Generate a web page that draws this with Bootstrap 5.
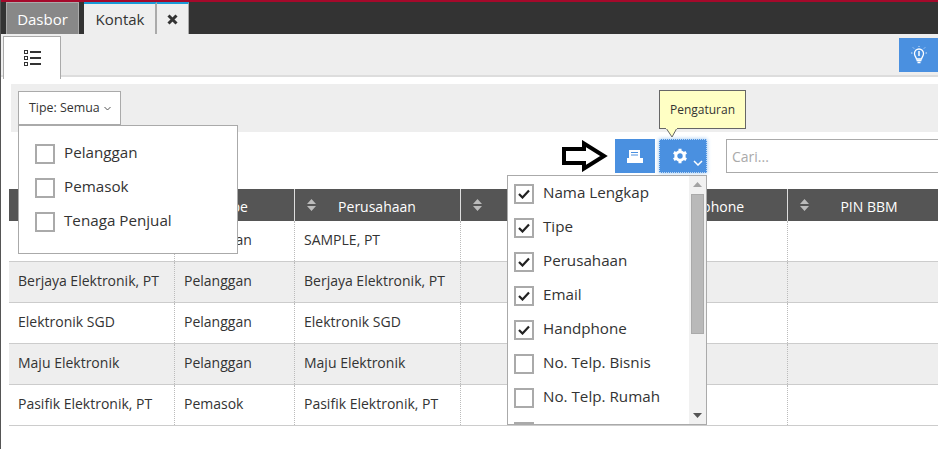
<!DOCTYPE html>
<html lang="id">
<head>
  <meta charset="UTF-8" />
  <meta name="viewport" content="width=device-width, initial-scale=1" />
  <title>Kontak</title>
  <link href="https://cdn.jsdelivr.net/npm/bootstrap@5.3.2/dist/css/bootstrap.min.css" rel="stylesheet">
  <style>
    html, body { height: 449px; overflow: hidden; }
    body {
      font-family: "Open Sans", "Liberation Sans", sans-serif;
      font-size: 14px;
      color: #333;
      background: #fff;
      border-left: 1px solid #555;
    }
    .topbar {
      height: 34px;
      background: #333;
      border-top: 2px solid #a5092b;
      margin-left: -1px;
      padding-left: 6px;
    }
    .toptab {
      height: 32px;
      font-size: 15px;
      text-align: center;
    }
    .toptab-off { width: 73px; margin-right: 5px; background: #888; color: #fff; border: 1px solid #aaa; border-bottom: 0; line-height: 32px; }
    .toptab-on { width: 73px; padding-left: 1px; background: #eee; border-top: 2px solid #1a9ad6; line-height: 30px; border-right: 2px solid #aaa; }
    .toptab-x { width: 32px; background: #eee; border-top: 2px solid #1a9ad6; border-right: 1px solid #aaa; }
    .subbar {
      height: 43px;
      background: #eee;
      border-bottom: 2px solid #ddd;
      padding-left: 2px;
    }
    .subtab {
      width: 58px;
      height: 43px;
      background: #fff;
      border: 1px solid #aaa;
      border-bottom: 0;
      margin-top: 2px;
    }
    .bluebtn {
      background: #4a90e0;
      border: 0;
      border-radius: 0;
      padding: 0;
      height: 34px;
    }
    .bulbbtn { width: 39px; margin-top: 4px; }
    .filterstrip {
      height: 48px;
      margin: 7px 0 7px 10px;
      background: #eee;
      padding: 7px 0 0 7px;
    }
    .filterbtn {
      width: 103px;
      height: 34px;
      background: #fff;
      border: 1px solid #aaa;
      font-size: 12.4px;
      color: #333;
      padding: 0 0 0 10px;
      white-space: nowrap;
    }
    .droplist {
      position: absolute;
      background: #fff;
      border: 1px solid #aaa;
      z-index: 5;
      font-size: 15.2px;
    }
    .tipe-list { left: 0; top: 34px; width: 220px; height: 129px; padding: 10px 16px; }
    .opt { height: 34px; gap: 9px; white-space: nowrap; }
    .optlabel { margin-bottom: 2px; }
    .kolom-list { right: 0; top: 36px; width: 200px; height: 250px; padding: 0 6px; overflow: hidden; }
    .cek {
      flex: none;
      width: 20px;
      height: 20px;
      border: 2px solid #aaa;
      background: #fff;
      display: flex;
      align-items: center;
      justify-content: center;
      margin-top: 1px;
    }
    .toolrow { height: 34px; }
    .arrowicon { margin-right: 7px; }
    .printbtn { width: 40px; margin-right: 4px; }
    .gearbtn { width: 48px; border: 1px dotted #bcd8f5; box-shadow: 0 0 4px #9cc6f0; position: relative; }
    .gearwrap { margin-right: 19px; }
    .caricell {
      width: 212px;
      height: 34px;
      border: 1px solid #aaa;
      border-right: 0;
      border-radius: 0;
      padding: 0 5px;
      font-size: 14px;
      box-shadow: none;
    }
    .caricell::placeholder { color: #aaa; }
    .tipbox {
      position: absolute;
      left: 0;
      top: -49px;
      width: 87px;
      height: 39px;
      background: #ffffc4;
      border: 1px solid #666;
      font-size: 12px;
      line-height: 37px;
      text-align: center;
      z-index: 6;
    }
    .tiparrow { position: absolute; left: 5px; top: 37px; }
    .tablebox { margin: 16px 0 0 8px; overflow: hidden; }
    .kontak-table { width: 942px; table-layout: fixed; margin: 0; }
    .kontak-table th {
      height: 32px;
      padding: 2px 8px 0;
      background: #555;
      color: #fff;
      font-weight: 500;
      font-size: 14px;
      text-align: center;
      border: 0;
      border-right: 1px solid #ddd;
      position: relative;
      vertical-align: middle;
    }
    .sortmark { position: absolute; left: 12px; top: 10px; }
    .kontak-table td {
      height: 41px;
      padding: 0 9px 2px;
      vertical-align: middle;
      font-size: 14px;
      color: #333;
      background: #fff;
      border: 0;
      border-right: 1px dotted #bbb;
      border-bottom: 1px solid #ccc;
      white-space: nowrap;
    }
    .kontak-table td + td { padding-left: 9.5px; }
    .kontak-table tbody tr:first-child td { height: 40px; }
    .kontak-table tr.abu td { background: #eee; }
    .scrolltrack { position: absolute; right: 0; top: 0; bottom: 0; width: 17px; background: #f1f1f1; }
    .scrollthumb { position: absolute; left: 2px; top: 18px; width: 13px; height: 140px; background: #b9b9b9; border: 1px solid #aaa; }
    .scrollup { position: absolute; left: 4px; top: 6px; }
    .scrolldown { position: absolute; left: 4px; bottom: 6px; }
  </style>
</head>
<body>

  <div class="topbar d-flex align-items-start">
    <div class="toptab toptab-off">Dasbor</div>
    <div class="toptab toptab-on">Kontak</div>
    <div class="toptab toptab-x d-flex align-items-center justify-content-center">
      <svg width="11" height="11" viewBox="0 0 11 11"><path d="M1.5 1.5 9.5 9.5M9.5 1.5 1.5 9.5" stroke="#333" stroke-width="3"/></svg>
    </div>
  </div>

  <div class="subbar d-flex justify-content-between">
    <div class="subtab d-flex align-items-center justify-content-center">
      <svg width="19" height="18" viewBox="0 0 19 18" fill="none" stroke="#333">
        <rect x="1.5" y="1.5" width="3" height="3"/><rect x="1.5" y="7.5" width="3" height="3"/><rect x="1.5" y="13.5" width="3" height="3"/>
        <path d="M7 3h11M7 9h11M7 15h11" stroke-width="2"/>
      </svg>
    </div>
    <button class="btn bluebtn bulbbtn d-flex align-items-center justify-content-center">
      <svg width="16" height="18" viewBox="0 0 16 18" fill="none" stroke="#fff">
        <path d="M5.5 13C5 11 3.5 10 3.5 7.5a4.5 4.5 0 0 1 9 0C12.500 10 11 11 10.500 13z" stroke-width="1.300"/>
        <path d="M8 5v5" stroke-width="1.500"/>
        <path d="M5.500 14.500h5M6.500 16.500h3" stroke-width="1.500"/>
        <path d="M0 7h1.500M14.500 7H16M2 1.500l1 1M14 1.500l-1 1M8 0v1" stroke-width=".8"/>
      </svg>
    </button>
  </div>

  <div class="filterstrip">
    <div class="position-relative d-inline-block">
      <button class="btn filterbtn rounded-0 d-flex align-items-center gap-1">Tipe: Semua
        <svg width="7" height="5" viewBox="0 0 7 5" fill="none" stroke="#555"><path d="M.5 1l3 3 3-3"/></svg>
      </button>
      <div class="droplist tipe-list">
        <div class="opt d-flex align-items-center"><span class="cek"></span><span class="optlabel">Pelanggan</span></div>
        <div class="opt d-flex align-items-center"><span class="cek"></span><span class="optlabel">Pemasok</span></div>
        <div class="opt d-flex align-items-center"><span class="cek"></span><span class="optlabel">Tenaga Penjual</span></div>
      </div>
    </div>
  </div>

  <div class="toolrow d-flex justify-content-end align-items-center">
    <svg class="arrowicon" width="47" height="32" viewBox="0 0 47 32"><path d="M3 9h20V3.500L43 16 23 28.500V23H3z" fill="#fff" stroke="#000" stroke-width="4"/></svg>
    <button class="btn bluebtn printbtn d-flex align-items-center justify-content-center">
      <svg width="16" height="13" viewBox="0 0 16 13"><path d="M2 0h11v8H2zM0 8h16v5H0z" fill="#fff"/><path d="M4 2.500h7M4 5h7" stroke="#4a90e0"/></svg>
    </button>
    <div class="gearwrap position-relative">
      <button class="btn bluebtn gearbtn d-flex align-items-center">
        <svg style="margin-left:12px" width="16" height="16" viewBox="0 0 16 16" fill="none" stroke="#fff">
          <circle cx="8" cy="8" r="4.200" stroke-width="3"/>
          <path d="M8 .8v3M8 12.200v3M1.800 4.400l2.600 1.500M11.600 10.100l2.600 1.500M1.800 11.600l2.600-1.500M11.600 5.900l2.600-1.500" stroke-width="3"/>
        </svg>
        <svg style="margin:14px 0 0 5px" width="10" height="6" viewBox="0 0 10 6" fill="none" stroke="#fff" stroke-width="1.500"><path d="M1 1l4 4 4-4"/></svg>
      </button>
      <div class="tipbox">Pengaturan
        <svg class="tiparrow" width="16" height="11" viewBox="0 0 16 11"><path d="M1 0l6 9 5-9z" fill="#ffffc4" stroke="#666"/><path d="M1 0h11" stroke="#ffffc4" stroke-width="2"/></svg>
      </div>
      <div class="droplist kolom-list">
        <div class="opt d-flex align-items-center"><span class="cek"><svg width="12" height="10" viewBox="0 0 12 10" fill="none" stroke="#222" stroke-width="2.200"><path d="M1 5l3.500 3.500L11 1.500"/></svg></span><span class="optlabel">Nama Lengkap</span></div>
        <div class="opt d-flex align-items-center"><span class="cek"><svg width="12" height="10" viewBox="0 0 12 10" fill="none" stroke="#222" stroke-width="2.200"><path d="M1 5l3.500 3.500L11 1.500"/></svg></span><span class="optlabel">Tipe</span></div>
        <div class="opt d-flex align-items-center"><span class="cek"><svg width="12" height="10" viewBox="0 0 12 10" fill="none" stroke="#222" stroke-width="2.200"><path d="M1 5l3.500 3.500L11 1.500"/></svg></span><span class="optlabel">Perusahaan</span></div>
        <div class="opt d-flex align-items-center"><span class="cek"><svg width="12" height="10" viewBox="0 0 12 10" fill="none" stroke="#222" stroke-width="2.200"><path d="M1 5l3.500 3.500L11 1.500"/></svg></span><span class="optlabel">Email</span></div>
        <div class="opt d-flex align-items-center"><span class="cek"><svg width="12" height="10" viewBox="0 0 12 10" fill="none" stroke="#222" stroke-width="2.200"><path d="M1 5l3.500 3.500L11 1.500"/></svg></span><span class="optlabel">Handphone</span></div>
        <div class="opt d-flex align-items-center"><span class="cek"></span><span class="optlabel">No. Telp. Bisnis</span></div>
        <div class="opt d-flex align-items-center"><span class="cek"></span><span class="optlabel">No. Telp. Rumah</span></div>
        <div class="opt d-flex align-items-center"><span class="cek"></span></div>
        <div class="scrolltrack">
          <svg class="scrollup" width="9" height="5" viewBox="0 0 9 5"><path d="M0 5l4.500-5L9 5z" fill="#a3a3a3"/></svg>
          <div class="scrollthumb"></div>
          <svg class="scrolldown" width="9" height="5" viewBox="0 0 9 5"><path d="M0 0l4.500 5L9 0z" fill="#555"/></svg>
        </div>
      </div>
    </div>
    <input class="form-control caricell" type="text" placeholder="Cari...">
  </div>

  <div class="tablebox">
    <table class="table kontak-table">
      <colgroup>
        <col style="width:165px"><col style="width:120px"><col style="width:166px">
        <col style="width:164px"><col style="width:163px"><col style="width:164px">
      </colgroup>
      <thead>
        <tr>
          <th><svg class="sortmark" width="9" height="12" viewBox="0 0 9 12"><path d="M4.500 0 9 5H0zM0 7h9l-4.500 5z" fill="#bbb"/></svg>Nama Lengkap</th>
          <th><svg class="sortmark" width="9" height="12" viewBox="0 0 9 12"><path d="M4.500 0 9 5H0zM0 7h9l-4.500 5z" fill="#bbb"/></svg>Tipe</th>
          <th><svg class="sortmark" width="9" height="12" viewBox="0 0 9 12"><path d="M4.500 0 9 5H0zM0 7h9l-4.500 5z" fill="#bbb"/></svg>Perusahaan</th>
          <th><svg class="sortmark" width="9" height="12" viewBox="0 0 9 12"><path d="M4.500 0 9 5H0zM0 7h9l-4.500 5z" fill="#bbb"/></svg>Email</th>
          <th><svg class="sortmark" width="9" height="12" viewBox="0 0 9 12"><path d="M4.500 0 9 5H0zM0 7h9l-4.500 5z" fill="#bbb"/></svg>Handphone</th>
          <th><svg class="sortmark" width="9" height="12" viewBox="0 0 9 12"><path d="M4.500 0 9 5H0zM0 7h9l-4.500 5z" fill="#bbb"/></svg>PIN BBM</th>
        </tr>
      </thead>
      <tbody>
        <tr><td>SAMPLE, PT</td><td>Pelanggan</td><td>SAMPLE, PT</td><td></td><td></td><td></td></tr>
        <tr class="abu"><td>Berjaya Elektronik, PT</td><td>Pelanggan</td><td>Berjaya Elektronik, PT</td><td></td><td></td><td></td></tr>
        <tr><td>Elektronik SGD</td><td>Pelanggan</td><td>Elektronik SGD</td><td></td><td></td><td></td></tr>
        <tr class="abu"><td>Maju Elektronik</td><td>Pelanggan</td><td>Maju Elektronik</td><td></td><td></td><td></td></tr>
        <tr><td>Pasifik Elektronik, PT</td><td>Pemasok</td><td>Pasifik Elektronik, PT</td><td></td><td></td><td></td></tr>
      </tbody>
    </table>
  </div>

  <script src="https://cdn.jsdelivr.net/npm/bootstrap@5.3.2/dist/js/bootstrap.bundle.min.js"></script>
</body>
</html>
